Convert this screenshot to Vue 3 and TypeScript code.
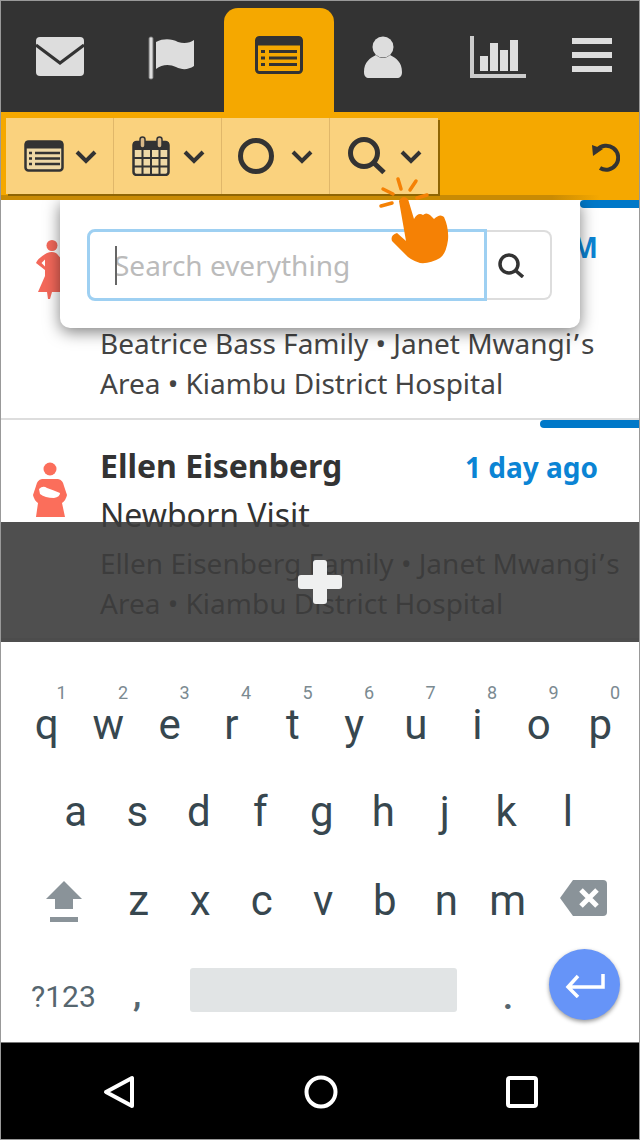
<script setup lang="ts">
interface Visit { name: string; time: string; title: string; family: string; area: string; bar: number; kind: 'pregnant' | 'mother' }
const visits: Visit[] = [
  { name: 'Beatrice Bass', time: '10:15 AM', title: 'Pregnancy Visit', family: 'Beatrice Bass Family', area: 'Area • Kiambu District Hospital', bar: 60, kind: 'pregnant' },
  { name: 'Ellen Eisenberg', time: '1 day ago', title: 'Newborn Visit', family: 'Ellen Eisenberg Family', area: 'Area • Kiambu District Hospital', bar: 100, kind: 'mother' }
]
const row1: [string, string][] = [['q','1'],['w','2'],['e','3'],['r','4'],['t','5'],['y','6'],['u','7'],['i','8'],['o','9'],['p','0']]
const row2 = ['a','s','d','f','g','h','j','k','l']
const row3 = ['z','x','c','v','b','n','m']
const chevrons = [0, 1, 2, 3]
</script>

<template>
  <div class="screen">
    <nav class="tabs">
      <div class="tab">
        <svg width="48" height="40" viewBox="0 0 48 40"><rect x="0" y="1" width="48" height="39" rx="4" fill="#ddd"/><path d="M0 9 L24 27 L48 9" fill="none" stroke="#333" stroke-width="3"/></svg>
      </div>
      <div class="tab">
        <svg width="48" height="44" viewBox="0 0 48 44"><rect x="1" y="1" width="4" height="42" rx="1.5" fill="#ddd" stroke="#777" stroke-width="1"/><path d="M8 6 C16 2 24 3 30 6 C36 8 42 7 46 4 V30 C40 34 34 34 28 31 C22 28 14 28 8 33 Z" fill="#ddd"/></svg>
      </div>
      <div class="tab active">
        <svg width="48" height="38" viewBox="0 0 48 38"><rect x="1.5" y="1.5" width="45" height="35" rx="3" fill="#f5a800" stroke="#333" stroke-width="3"/><rect x="1.5" y="1.5" width="45" height="8" fill="#333"/><path d="M14 15.5H42M14 22H42M14 28.5H42" stroke="#333" stroke-width="3"/><path d="M6 15.5H10M6 22H10M6 28.5H10" stroke="#333" stroke-width="3"/></svg>
      </div>
      <div class="tab">
        <svg width="38" height="42" viewBox="0 0 38 42"><circle cx="19" cy="11" r="10.5" fill="#ddd"/><path d="M0 36 C0 26 6 22 12 19 C16 23 22 23 26 19 C32 22 38 26 38 36 C38 40 36 42 33 42 H5 C2 42 0 40 0 36Z" fill="#ddd"/></svg>
      </div>
      <div class="tab">
        <svg width="56" height="42" viewBox="0 0 56 42"><path d="M2 0V40H56" fill="none" stroke="#ccc" stroke-width="4"/><rect x="10" y="20" width="8" height="15" fill="#ddd"/><rect x="20" y="7" width="8" height="28" fill="#ddd"/><rect x="30" y="14" width="8" height="21" fill="#ddd"/><rect x="40" y="4" width="8" height="31" fill="#ddd"/></svg>
      </div>
      <div class="tab">
        <svg width="40" height="36" viewBox="0 0 40 36"><rect y="2" width="40" height="6" fill="#ddd"/><rect y="16" width="40" height="6" fill="#ddd"/><rect y="30" width="40" height="6" fill="#ddd"/></svg>
      </div>
    </nav>

    <div class="toolbar">
      <div class="group">
        <div v-for="c in chevrons" :key="c" class="tool">
          <svg v-if="c === 0" class="ticon" width="40" height="32" viewBox="0 0 40 32"><rect x="1.5" y="1.5" width="37" height="29" rx="3" fill="#efd9a6" stroke="#333" stroke-width="2.5"/><rect x="1.5" y="1.5" width="37" height="7" fill="#333"/><path d="M11 13H36M11 18.5H36M11 24H36" stroke="#333" stroke-width="2.5"/><path d="M5 13H8M5 18.5H8M5 24H8" stroke="#333" stroke-width="2.5"/></svg>
          <svg v-else-if="c === 1" class="ticon" width="38" height="40" viewBox="0 0 38 40"><rect x="1.5" y="6" width="35" height="33" rx="3" fill="#efd9a6" stroke="#333" stroke-width="2.5"/><rect x="1.5" y="6" width="35" height="8" fill="#333"/><path d="M1.5 22H36.5M1.5 30.5H36.5M10.5 14V39M19 14V39M27.5 14V39" stroke="#333" stroke-width="2"/><rect x="8" y="1" width="5" height="11" rx="2.5" fill="#d8b888" stroke="#333" stroke-width="1.5"/><rect x="25" y="1" width="5" height="11" rx="2.5" fill="#d8b888" stroke="#333" stroke-width="1.5"/></svg>
          <svg v-else-if="c === 2" class="ticon ring" width="36" height="36" viewBox="0 0 36 36"><circle cx="18" cy="18" r="15.5" fill="none" stroke="#333" stroke-width="5"/></svg>
          <svg v-else class="ticon" width="38" height="38" viewBox="0 0 38 38"><circle cx="16" cy="16" r="13.5" fill="none" stroke="#333" stroke-width="5"/><path d="M26 26L36 35.5" stroke="#333" stroke-width="5"/></svg>
          <svg class="chev" width="22" height="14" viewBox="0 0 22 14"><path d="M2 2L11 11L20 2" fill="none" stroke="#333" stroke-width="4"/></svg>
        </div>
      </div>
      <svg class="reset" width="30" height="30" viewBox="0 0 30 30"><path d="M7 7 A12 12 0 1 1 10 25" fill="none" stroke="#333" stroke-width="4"/><path d="M2 2 L13 6 L3 13 Z" fill="#333"/></svg>
    </div>

    <main class="list">
      <article v-for="v in visits" :key="v.name" class="row">
        <span class="bar" :style="{ width: v.bar + 'px' }"></span>
        <svg v-if="v.kind === 'pregnant'" class="person" width="40" height="60" viewBox="0 0 40 60"><circle cx="22" cy="5.5" r="5.5" fill="#f4685a"/><path d="M17 13 Q22 11 26 13 Q34 20 34 30 L30 36 L36 52 L22 52 L20 59 L18 59 L17 52 L8 52 L15 36 L15 30 L6 23 Q8 18 17 13Z" fill="#f4685a"/><path d="M11.5 23L15 19.5V26.5Z" fill="#fff"/></svg>
        <svg v-else class="person" width="40" height="60" viewBox="0 0 40 60"><circle cx="20" cy="9" r="6.5" fill="#fb6e5b"/><path d="M12 19 H28 Q33 20 34 26 L37 35 Q36 40 32 43 L35 57 H6 L8 43 Q4 40 3 35 L6 26 Q7 20 12 19Z" fill="#fb6e5b"/><path d="M9 29 Q13 25 17 28 Q23 30 30 33 Q30 37 24 38 Q15 38 10 34 Z" fill="#fff"/></svg>
        <div class="body">
          <div class="head">
            <strong class="name">{{ v.name }}</strong>
            <span class="time">{{ v.time }}</span>
          </div>
          <div class="title">{{ v.title }}</div>
          <div class="meta">{{ v.family }} • Janet Mwangi<span class="apos">’</span>s {{ v.area }}</div>
        </div>
      </article>

      <div class="popup">
        <div class="search">
          <div class="input"><span class="caret"></span>Search everything</div>
          <div class="go">
            <svg width="26" height="25" viewBox="0 0 26 25"><circle cx="11" cy="11" r="9" fill="none" stroke="#333" stroke-width="3.5"/><path d="M17.5 17.5L25 24" stroke="#333" stroke-width="3.5"/></svg>
          </div>
        </div>
      </div>

      <div class="fab">
        <svg width="44" height="44" viewBox="0 0 44 44"><rect x="15" width="14" height="44" rx="3" fill="#eff0f0"/><rect y="15" width="44" height="14" rx="3" fill="#eff0f0"/></svg>
      </div>
    </main>

    <section class="keyboard">
      <div class="krow first">
        <div v-for="k in row1" :key="k[0]" class="key"><sup class="num">{{ k[1] }}</sup>{{ k[0] }}</div>
      </div>
      <div class="krow second">
        <div v-for="k in row2" :key="k" class="key">{{ k }}</div>
      </div>
      <div class="krow third">
        <div class="shift">
          <svg width="36" height="41" viewBox="0 0 36 41"><path d="M18 0L36 18H27V28H9V18H0Z" fill="#8a9399"/><rect x="4" y="36" width="28" height="5" fill="#8a9399"/></svg>
        </div>
        <div v-for="k in row3" :key="k" class="key">{{ k }}</div>
        <div class="back">
          <svg width="48" height="38" viewBox="0 0 48 38"><path d="M14 1H44Q48 1 48 5V33Q48 37 44 37H14L1 19Z" fill="#8a9399"/><path d="M22 11L38 27M38 11L22 27" stroke="#fff" stroke-width="5"/></svg>
        </div>
      </div>
      <div class="krow bottom">
        <div class="sym">?123</div>
        <div class="comma">,</div>
        <div class="space"></div>
        <div class="dot">.</div>
        <div class="enter">
          <svg width="40" height="26" viewBox="0 0 40 26"><path d="M38 2V15H4M13 4L3 15L13 25" fill="none" stroke="#fff" stroke-width="3.5"/></svg>
        </div>
      </div>
    </section>

    <footer class="sysnav">
      <svg width="32" height="34" viewBox="0 0 32 34"><path d="M29 3V31L3 17Z" fill="none" stroke="#fff" stroke-width="4" stroke-linejoin="round"/></svg>
      <svg width="34" height="34" viewBox="0 0 34 34"><circle cx="17" cy="17" r="14.5" fill="none" stroke="#fff" stroke-width="4"/></svg>
      <svg width="32" height="32" viewBox="0 0 32 32"><rect x="2" y="2" width="28" height="28" rx="2" fill="none" stroke="#fff" stroke-width="4"/></svg>
    </footer>

    <svg class="hand" width="72" height="90" viewBox="378 176 72 90">
      <path d="M399 201 Q403 194 408 199 L414 219 Q418 212 423 215 Q426 212 430 215 L434 219 Q440 213 444 217 Q449 228 448 240 Q446 254 440 258 Q430 264 420 263 Q410 260 405 254 L392 241 Q390 235 397 233 L406 241 Z" fill="#f58105"/>
      <path d="M383 189L393 194M398 179L401 189M416 181L410 190M417 198L427 195M381 206L392 203" stroke="#f58105" stroke-width="3.5" stroke-linecap="round"/>
    </svg>
  </div>
</template>

<style>
html, body { margin: 0; background: #fff; }
</style>

<style scoped>
.screen { position: relative; width: 640px; height: 1140px; display: flex; flex-direction: column; overflow: hidden; background: #fff; font-family: "Noto Sans", sans-serif; color: #333; }
.screen::after { content: ""; position: absolute; inset: 0; border: 1px solid #999; pointer-events: none; z-index: 20; }

.tabs { height: 112px; flex: none; display: grid; grid-template-columns: 120px 104px 110px 98px 132px 56px; background: #333; }
.tab { display: flex; align-items: flex-start; justify-content: center; padding-top: 36px; box-sizing: border-box; }
.tab.active { margin-top: 8px; padding-top: 28px; background: #f5a800; border-radius: 14px 14px 0 0; }

.toolbar { height: 88px; flex: none; box-sizing: border-box; padding: 6px 20px 0 6px; display: flex; justify-content: space-between; align-items: flex-start; background: #f5a800; position: relative; z-index: 1; }
.toolbar::before { content: ""; position: absolute; left: 0; bottom: 0; width: 600px; height: 5px; background: linear-gradient(to right, #c98b04 92%, rgba(201, 139, 4, 0)); }
.group { position: relative; display: flex; height: 76px; background: #fad27e; box-shadow: 2px 2px 0 #8f6504; }
.tool { width: 108px; box-sizing: border-box; display: flex; align-items: center; justify-content: space-between; padding: 0 16px 0 18px; border-right: 1px solid #e0b76a; }
.tool:last-child { border-right: 0; }
.chev { flex: none; margin-top: 2px; }
.ticon { flex: none; }
.ticon.ring { margin-left: -2px; }
.reset { margin-top: 25px; }

.list { position: relative; flex: none; height: 442px; overflow: hidden; }
.row { position: relative; height: 220px; box-sizing: border-box; display: flex; border-bottom: 2px solid #ddd; padding: 0 15px 0 30px; }
.bar { position: absolute; top: 0; right: 0; height: 8px; background: #0078c8; border-radius: 4px 0 0 4px; }
.person { flex: none; margin-top: 40px; margin-right: 30px; }
.body { flex: 1; min-width: 0; }
.head { display: flex; justify-content: space-between; align-items: baseline; padding-top: 26px; padding-right: 27px; line-height: 40px; }
.name { font-size: 32px; font-weight: 700; color: #333; }
.time { font-size: 28px; font-weight: 700; color: #0b84d4; }
.title { font-size: 32px; line-height: 40px; margin-top: 8px; color: #333; }
.meta { font-size: 28px; line-height: 40px; margin-top: 8px; color: #444; }
.apos { margin: 0 2px; }

.popup { position: absolute; left: 60px; top: 0; width: 520px; height: 128px; background: #fff; border-radius: 0 0 10px 10px; box-shadow: 0 4px 16px rgba(0, 0, 0, 0.5); z-index: 2; }
.search { display: flex; padding: 29px 28px 0 27px; height: 72px; }
.input { position: relative; flex: 1; box-sizing: border-box; display: flex; align-items: center; padding-left: 24px; border: 3px solid #9ed0f2; border-radius: 8px 0 0 8px; font-size: 28px; color: #bbb; }
.caret { position: absolute; left: 25px; top: 14px; width: 2px; height: 39px; background: #666; }
.go { width: 65px; height: 70px; align-self: center; box-sizing: border-box; display: flex; align-items: center; justify-content: center; padding-right: 16px; border: 2px solid #ddd; border-left: 0; border-radius: 0 8px 8px 0; }

.fab { position: absolute; left: 0; right: 0; top: 322px; height: 120px; display: flex; align-items: center; justify-content: center; background: rgba(60, 60, 60, 0.9); z-index: 3; }

.keyboard { height: 401px; flex: none; box-sizing: border-box; padding-top: 36px; background: #fff; border-bottom: 1px solid #777; font-family: Roboto, sans-serif; color: #37474f; z-index: 4; }
.krow { display: flex; height: 89px; }
.first { padding-left: 16px; }
.first .key { line-height: 93px; }
.second { padding-left: 45px; }
.key { position: relative; width: 61.5px; text-align: center; font-size: 42px; line-height: 89px; }
.num { position: absolute; right: 11px; top: 3px; font-size: 18px; line-height: 24px; color: #7b8a91; }
.shift { width: 108px; box-sizing: border-box; padding: 25px 0 0 46px; }
.back { flex: 1; padding: 23px 0 0 20px; }
.bottom { height: 88px; align-items: flex-start; position: relative; }
.sym { width: 107px; box-sizing: border-box; padding: 32px 0 0 31px; font-size: 30px; line-height: 40px; color: #56666f; }
.comma { width: 83px; box-sizing: border-box; padding: 29px 0 0 26px; font-size: 34px; line-height: 40px; color: #56666f; font-weight: 700; }
.space { width: 267px; height: 44px; margin-top: 23px; background: #e1e4e5; border-radius: 3px; }
.dot { width: 92px; padding: 32px 0 0 46px; box-sizing: border-box; font-size: 34px; line-height: 40px; color: #56666f; font-weight: 700; }
.enter { width: 71px; height: 71px; margin-top: 4px; border-radius: 50%; display: flex; align-items: center; justify-content: center; background: #6694f8; box-shadow: 0 2px 4px rgba(0, 0, 0, 0.4); }

.sysnav { flex: none; height: 97px; background: #000; display: flex; align-items: center; box-sizing: border-box; padding: 0 102px 0 103px; justify-content: space-between; }
.hand { position: absolute; left: 378px; top: 176px; z-index: 6; }
</style>
